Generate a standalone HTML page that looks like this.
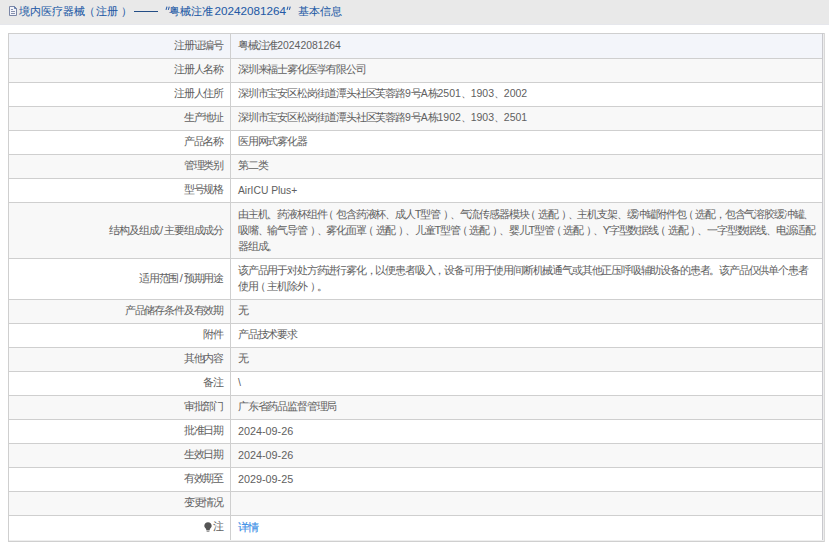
<!DOCTYPE html>
<html><head><meta charset="utf-8"><style>
html,body{margin:0;padding:0;background:#fff;width:829px;height:546px;overflow:hidden;position:relative}
body{font-family:"Liberation Sans",sans-serif;color:#555}
.a{position:absolute}
.hdr{left:0;top:0;width:829px;height:24px;background:#e9e9e9;border-bottom:1px solid #e6e7ec}
.ht{position:absolute;top:3px;font-size:11px;line-height:16px;color:#245aa6;white-space:nowrap;-webkit-text-stroke:0.05px #245aa6}
.hl{position:absolute;background:#cfcfcf;height:1px}
.vl{position:absolute;background:#cfcfcf;width:1px}
.bg{position:absolute;left:9px;width:813px}
.lab{position:absolute;left:9px;width:214px;text-align:right;font-size:11px;line-height:16px;white-space:nowrap;color:#606060;letter-spacing:-1.18px}
.val{position:absolute;left:238px;font-size:11px;line-height:16px;white-space:nowrap;color:#606060;letter-spacing:-1.18px}
.n{font-size:10.5px;letter-spacing:0;-webkit-text-stroke:0}
.n1{font-size:10.4px;letter-spacing:0;-webkit-text-stroke:0}
.n2{font-size:10.3px;letter-spacing:0;position:relative;top:1px;-webkit-text-stroke:0}
.d{font-size:10.8px;letter-spacing:0;position:relative;top:1px;-webkit-text-stroke:0}
.lp{position:relative;left:-3px}
.rp{position:relative;left:3px}
.link{position:relative;top:1px;color:#3a8ee6;-webkit-text-stroke:0.15px #3a8ee6}
</style></head><body>
<div class="a hdr"></div>

<svg class="a" style="left:9px;top:6px" width="9" height="10" viewBox="0 0 9 10"><path d="M0.5 0.5H5.5L7.5 2.5V9.5H0.5Z" fill="#f3f4fa" stroke="#7a86a6" stroke-width="1"/><path d="M5.5 0.5V2.5H7.5Z" fill="#6a80aa" stroke="#6a80aa" stroke-width="1"/><path d="M2 3.5H4M2 5.5H6M2 7.5H6" stroke="#8791ad" stroke-width="1"/></svg>
<div class="ht" style="left:19px">境内医疗器械</div>
<div class="ht" style="left:84px">（</div>
<div class="ht" style="left:96px">注册</div>
<div class="ht" style="left:121px">）</div>
<div class="a" style="left:134px;top:11px;width:24px;height:1px;background:#234d85"></div>
<svg class="a" style="left:165px;top:6px" width="5" height="5" viewBox="0 0 5 5"><path d="M2 0.6L1 3.8M4.3 0.6L3.3 3.8" stroke="#2f5fa8" stroke-width="1.1" fill="none"/></svg>
<div class="ht" style="left:169px">粤械注准</div>
<div class="ht" style="left:214.5px;font-size:11.7px">20242081264</div>
<svg class="a" style="left:286px;top:6px" width="5" height="5" viewBox="0 0 5 5"><path d="M2 0.6L1 3.8M4.3 0.6L3.3 3.8" stroke="#2f5fa8" stroke-width="1.1" fill="none"/></svg>
<div class="ht" style="left:298px">基本信息</div>
<div class="bg" style="top:34px;height:24px;background:#f3f5fa"></div>
<div class="bg" style="top:59px;height:23px;background:#f8f8f8"></div>
<div class="bg" style="top:107px;height:23px;background:#f8f8f8"></div>
<div class="bg" style="top:155px;height:23px;background:#f8f8f8"></div>
<div class="bg" style="top:203px;height:55px;background:#f8f8f8"></div>
<div class="bg" style="top:300px;height:23px;background:#f8f8f8"></div>
<div class="bg" style="top:348px;height:23px;background:#f8f8f8"></div>
<div class="bg" style="top:396px;height:23px;background:#f8f8f8"></div>
<div class="bg" style="top:444px;height:23px;background:#f8f8f8"></div>
<div class="bg" style="top:492px;height:23px;background:#f8f8f8"></div>
<div class="hl" style="left:8px;top:33px;width:817px"></div>
<div class="hl" style="left:8px;top:58px;width:817px"></div>
<div class="hl" style="left:8px;top:82px;width:817px"></div>
<div class="hl" style="left:8px;top:106px;width:817px"></div>
<div class="hl" style="left:8px;top:130px;width:817px"></div>
<div class="hl" style="left:8px;top:154px;width:817px"></div>
<div class="hl" style="left:8px;top:178px;width:817px"></div>
<div class="hl" style="left:8px;top:202px;width:817px"></div>
<div class="hl" style="left:8px;top:258px;width:817px"></div>
<div class="hl" style="left:8px;top:299px;width:817px"></div>
<div class="hl" style="left:8px;top:323px;width:817px"></div>
<div class="hl" style="left:8px;top:347px;width:817px"></div>
<div class="hl" style="left:8px;top:371px;width:817px"></div>
<div class="hl" style="left:8px;top:395px;width:817px"></div>
<div class="hl" style="left:8px;top:419px;width:817px"></div>
<div class="hl" style="left:8px;top:443px;width:817px"></div>
<div class="hl" style="left:8px;top:467px;width:817px"></div>
<div class="hl" style="left:8px;top:491px;width:817px"></div>
<div class="hl" style="left:8px;top:515px;width:817px"></div>
<div class="hl" style="left:9px;top:540px;width:814px;background:#eeeeee"></div>
<div class="hl" style="left:8px;top:541px;width:817px"></div>
<div class="vl" style="left:8px;top:33px;height:509px"></div>
<div class="vl" style="left:824px;top:33px;height:509px;background:#d8d8d8"></div>
<div class="vl" style="left:822px;top:33px;height:507px;background:#c9c9ce"></div>
<div class="vl" style="left:823px;top:34px;height:507px;background:#ededed"></div>
<div class="vl" style="left:230px;top:33px;height:507px"></div>
<div class="lab" style="top:37px">注册证编号</div>
<div class="val" style="top:37px">粤械注准<span class=n1>20242081264</span></div>
<div class="lab" style="top:61px">注册人名称</div>
<div class="val" style="top:61px">深圳来福士雾化医学有限公司</div>
<div class="lab" style="top:85px">注册人住所</div>
<div class="val" style="top:85px">深圳市宝安区松岗街道潭头社区芙蓉路<span class=n>9</span>号<span class=n>A</span>栋<span class=n>2501</span>、<span class=n>1903</span>、<span class=n>2002</span></div>
<div class="lab" style="top:109px">生产地址</div>
<div class="val" style="top:109px">深圳市宝安区松岗街道潭头社区芙蓉路<span class=n>9</span>号<span class=n>A</span>栋<span class=n>1902</span>、<span class=n>1903</span>、<span class=n>2501</span></div>
<div class="lab" style="top:133px">产品名称</div>
<div class="val" style="top:133px">医用网式雾化器</div>
<div class="lab" style="top:157px">管理类别</div>
<div class="val" style="top:157px">第二类</div>
<div class="lab" style="top:181px">型号规格</div>
<div class="val" style="top:181px"><span class=n2>AirICU Plus+</span></div>
<div class="lab" style="top:222px">结构及组成<span style="letter-spacing:0;margin:0 1px 0 1.5px">/</span>主要组成成分</div>
<div class="val" style="top:206px">由主机、药液杯组件<span class=lp>（</span>包含药液杯、成人T型管<span class=rp>）</span>、气流传感器模块<span class=lp>（</span>选配<span class=rp>）</span>、主机支架、缓冲罐附件包<span class=lp>（</span>选配，包含气溶胶缓冲罐、<br>吸嘴、输气导管<span class=rp>）</span>、雾化面罩<span class=lp>（</span>选配<span class=rp>）</span>、儿童T型管<span class=lp>（</span>选配<span class=rp>）</span>、婴儿T型管<span class=lp>（</span>选配<span class=rp>）</span>、Y字型数据线<span class=lp>（</span>选配<span class=rp>）</span>、一字型数据线、电源适配<br>器组成。</div>
<div class="lab" style="top:270px">适用范围<span style="letter-spacing:0;margin:0 1px 0 1.5px">/</span>预期用途</div>
<div class="val" style="top:262px">该产品用于对处方药进行雾化，以便患者吸入，设备可用于使用间断机械通气或其他正压呼吸辅助设备的患者。该产品仅供单个患者<br>使用<span class=lp>（</span>主机除外<span class=rp>）</span>。</div>
<div class="lab" style="top:302px">产品储存条件及有效期</div>
<div class="val" style="top:302px">无</div>
<div class="lab" style="top:326px">附件</div>
<div class="val" style="top:326px">产品技术要求</div>
<div class="lab" style="top:350px">其他内容</div>
<div class="val" style="top:350px">无</div>
<div class="lab" style="top:374px">备注</div>
<div class="val" style="top:374px"><span class=n>\</span></div>
<div class="lab" style="top:398px">审批部门</div>
<div class="val" style="top:398px">广东省药品监督管理局</div>
<div class="lab" style="top:422px">批准日期</div>
<div class="val" style="top:422px"><span class=d>2024-09-26</span></div>
<div class="lab" style="top:446px">生效日期</div>
<div class="val" style="top:446px"><span class=d>2024-09-26</span></div>
<div class="lab" style="top:470px">有效期至</div>
<div class="val" style="top:470px"><span class=d>2029-09-25</span></div>
<div class="lab" style="top:494px">变更情况</div>
<div class="val" style="top:494px"></div>
<div class="lab" style="top:518px"><svg style="vertical-align:-2px;margin-right:1px" width="8" height="10" viewBox="0 0 8 10"><path d="M4 0.2C1.9 0.2 0.3 1.8 0.3 3.8C0.3 5.3 1.3 6.1 2.2 7.2V8.2H5.8V7.2C6.7 6.1 7.7 5.3 7.7 3.8C7.7 1.8 6.1 0.2 4 0.2Z" fill="#555"/><rect x="2.6" y="8.6" width="2.8" height="1.2" fill="#888"/></svg>注</div>
<div class="val" style="top:518px"><span class=link>详情</span></div>
</body></html>
